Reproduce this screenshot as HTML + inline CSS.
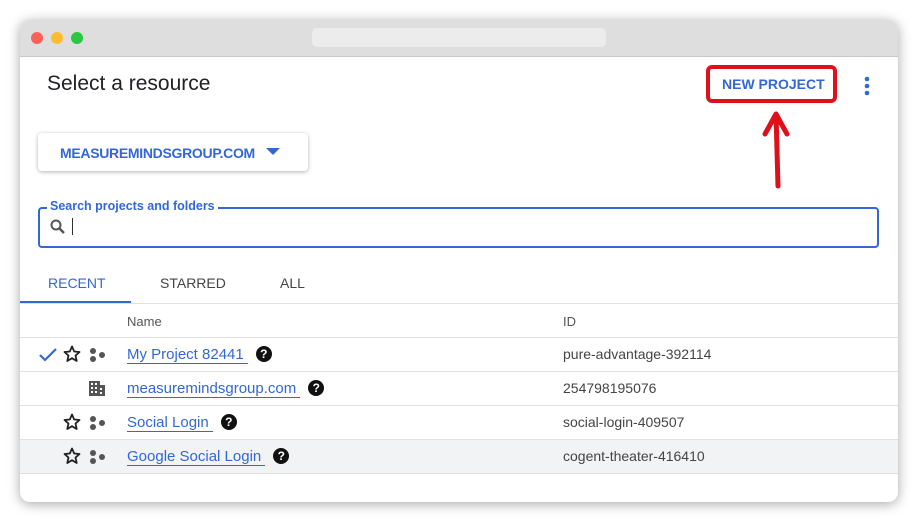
<!DOCTYPE html><html><head><style>
body{margin:0;width:917px;height:522px;background:#fff;position:relative;overflow:hidden;font-family:"Liberation Sans",Arial,sans-serif}
.win{position:absolute;left:20px;top:20px;width:878px;height:482px;border-radius:10px;background:#fff;box-shadow:0 2px 12px rgba(0,0,0,.35);overflow:hidden}
.bar{position:absolute;left:0;top:0;right:0;height:36px;background:#dedede;border-bottom:1px solid #c8c8c8}
.dot{position:absolute;top:12px;width:12px;height:12px;border-radius:50%}
.url{position:absolute;left:292px;top:8px;width:294px;height:19px;border-radius:5px;background:#ececec}
.a{position:absolute;white-space:nowrap}
.blue{color:#3367d6}
.row{position:absolute;left:0;right:0;height:33px;border-top:1px solid #e0e0e0}
.lnk{color:#3367d6;font-size:15px;border-bottom:1px solid #3367d6;padding-right:4px}
.q{display:inline-block;width:16px;height:16px;border-radius:50%;background:#111;color:#fff;font-size:12px;font-weight:bold;text-align:center;line-height:16px;margin-left:8px;vertical-align:1px}
.id{position:absolute;left:543px;top:8px;font-size:14px;color:#444}
.star{position:absolute;left:43px;top:7px}
.pj{position:absolute;left:69px;top:10px;width:18px;height:14px}
</style></head><body>
<div class="win">
<div class="bar"><div class="dot" style="left:11px;background:#fe5f57"></div><div class="dot" style="left:31px;background:#febc2e"></div><div class="dot" style="left:51px;background:#28c840"></div><div class="url"></div></div>
<div class="a" style="left:27px;top:52px;font-size:21px;color:#202124">Select a resource</div>
<div class="a blue" style="left:702px;top:56px;font-size:14px;font-weight:bold">NEW PROJECT</div>
<div class="a" style="left:686px;top:45px;width:123px;height:30px;border:4px solid #e0101b;border-radius:6px"></div>
<svg class="a" style="left:736px;top:84px" width="40" height="86"><path d="M22 82 L20 10 M9 30 L20 10 L31 30" stroke="#e0101b" stroke-width="5" fill="none" stroke-linecap="round" stroke-linejoin="round"/></svg>
<svg class="a" style="left:843px;top:56px" width="8" height="20"><circle cx="4" cy="3" r="2.3" fill="#3367d6"/><circle cx="4" cy="10" r="2.3" fill="#3367d6"/><circle cx="4" cy="17" r="2.3" fill="#3367d6"/></svg>
<div class="a" style="left:18px;top:113px;width:270px;height:38px;border-radius:4px;box-shadow:0 1px 4px rgba(0,0,0,.3);background:#fff"></div>
<div class="a blue" style="left:40px;top:125px;font-size:14px;font-weight:bold;letter-spacing:-.3px">MEASUREMINDSGROUP.COM</div>
<svg class="a" style="left:246px;top:128px" width="14" height="8"><path d="M0 0H14L7 7Z" fill="#3367d6"/></svg>
<div class="a" style="left:18px;top:187px;width:837px;height:37px;border:2px solid #3367d6;border-radius:4px"></div>
<div class="a blue" style="left:27px;top:179px;font-size:12.5px;background:#fff;padding:0 3px;font-weight:bold">Search projects and folders</div>
<svg class="a" style="left:30px;top:199px" width="16" height="16"><circle cx="6" cy="6" r="4.5" stroke="#555" stroke-width="2" fill="none"/><path d="M9.5 9.5L14 14" stroke="#555" stroke-width="2.5"/></svg>
<div class="a" style="left:52px;top:198px;width:1px;height:17px;background:#333"></div>
<div class="a blue" style="left:28px;top:255px;font-size:14px">RECENT</div>
<div class="a" style="left:140px;top:255px;font-size:14px;color:#444">STARRED</div>
<div class="a" style="left:260px;top:255px;font-size:14px;color:#444">ALL</div>
<div class="a" style="left:0;top:281px;width:111px;height:2px;background:#3367d6"></div>
<div class="row" style="top:283px"><div class="a" style="left:107px;top:10px;font-size:13px;color:#555">Name</div><div class="id" style="top:10px;font-size:13px;color:#555">ID</div></div>
<div class="row" style="top:317px">
<svg class="a" style="left:19px;top:10px" width="18" height="14"><path d="M1 7L6 12L17 1" stroke="#3367d6" stroke-width="2.2" fill="none"/></svg>
<svg class="star" width="18" height="18"><path d="M9 1.5L11.2 6.5L16.5 7L12.5 10.6L13.7 16L9 13.2L4.3 16L5.5 10.6L1.5 7L6.8 6.5Z" fill="none" stroke="#222" stroke-width="1.8" stroke-linejoin="round"/></svg><svg class="pj"><circle cx="4" cy="3" r="3" fill="#555"/><circle cx="4" cy="11" r="3" fill="#555"/><circle cx="13" cy="7" r="3" fill="#555"/></svg>
<div class="a" style="left:107px;top:8px"><span class="lnk">My Project 82441</span><span class="q">?</span></div><div class="id">pure-advantage-392114</div></div>
<div class="row" style="top:351px">
<svg class="a" style="left:69px;top:8px" width="16" height="16"><path d="M0 1H11V5H16V16H0Z" fill="#555"/><g fill="#fff"><rect x="2" y="3" width="2" height="2"/><rect x="6" y="3" width="2" height="2"/><rect x="2" y="7" width="2" height="2"/><rect x="6" y="7" width="2" height="2"/><rect x="2" y="11" width="2" height="2"/><rect x="6" y="11" width="2" height="2"/><rect x="11" y="8" width="2" height="2"/><rect x="11" y="12" width="2" height="2"/></g></svg>
<div class="a" style="left:107px;top:8px"><span class="lnk">measuremindsgroup.com</span><span class="q">?</span></div><div class="id">254798195076</div></div>
<div class="row" style="top:385px">
<svg class="star" width="18" height="18"><path d="M9 1.5L11.2 6.5L16.5 7L12.5 10.6L13.7 16L9 13.2L4.3 16L5.5 10.6L1.5 7L6.8 6.5Z" fill="none" stroke="#222" stroke-width="1.8" stroke-linejoin="round"/></svg><svg class="pj"><circle cx="4" cy="3" r="3" fill="#555"/><circle cx="4" cy="11" r="3" fill="#555"/><circle cx="13" cy="7" r="3" fill="#555"/></svg>
<div class="a" style="left:107px;top:8px"><span class="lnk">Social Login</span><span class="q">?</span></div><div class="id">social-login-409507</div></div>
<div class="row" style="top:419px;background:#f1f3f4">
<svg class="star" width="18" height="18"><path d="M9 1.5L11.2 6.5L16.5 7L12.5 10.6L13.7 16L9 13.2L4.3 16L5.5 10.6L1.5 7L6.8 6.5Z" fill="none" stroke="#222" stroke-width="1.8" stroke-linejoin="round"/></svg><svg class="pj"><circle cx="4" cy="3" r="3" fill="#555"/><circle cx="4" cy="11" r="3" fill="#555"/><circle cx="13" cy="7" r="3" fill="#555"/></svg>
<div class="a" style="left:107px;top:8px"><span class="lnk">Google Social Login</span><span class="q">?</span></div><div class="id">cogent-theater-416410</div></div>
<div class="row" style="top:453px;height:0"></div>
</div>
</body></html>
